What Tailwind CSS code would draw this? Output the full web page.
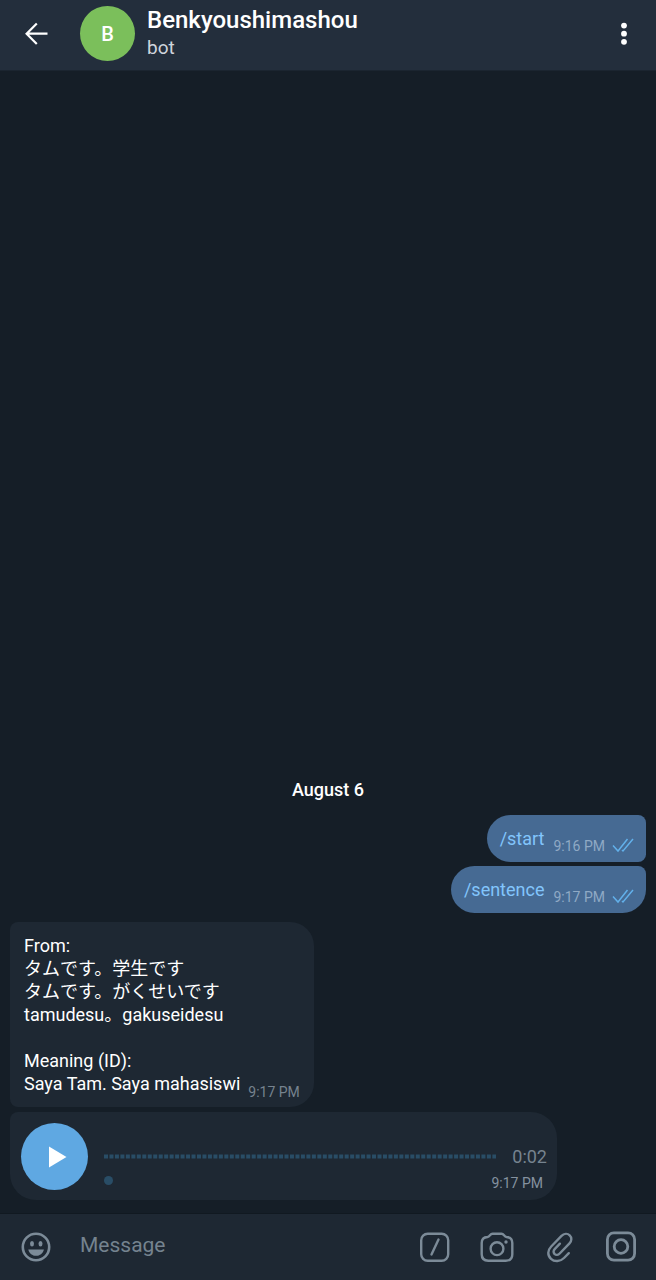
<!DOCTYPE html>
<html lang="en">
<head>
<meta charset="utf-8">
<meta name="viewport" content="width=device-width, initial-scale=1">
<title>Benkyoushimashou</title>
<script src="https://cdn.jsdelivr.net/npm/@tailwindcss/browser@4"></script>
</head>
<body class="flex min-h-screen flex-col bg-[#151e27] font-['Roboto','Noto_Sans_CJK_JP',sans-serif] text-white">

<header class="flex h-[71px] items-start border-b border-[#1b2530] bg-[#232e3c] px-6">
  <button type="button" aria-label="Back" class="mt-5">
    <svg class="h-7 w-7" viewBox="0 0 28 28" fill="none" stroke="#fff" stroke-width="2.2"><path d="M23.5 13.7H3M12.800 3.4L2.600 13.7l10.2 10.3"/></svg>
  </button>
  <div class="mt-1.5 ml-7 flex h-[55px] w-[55px] items-center justify-center rounded-full bg-[#7bbf5b] text-xl font-medium">B</div>
  <div class="ml-3 flex-1 pt-[5px]">
    <h1 class="text-2xl leading-[30px] font-medium">Benkyoushimashou</h1>
    <p class="text-[19px] leading-[26px] text-[#cfd5dc]">bot</p>
  </div>
  <button type="button" aria-label="More options" class="mt-5 px-1">
    <svg class="h-7 w-2" viewBox="0 0 8 28" fill="#fff"><circle cx="4" cy="5.6" r="2.9"/><circle cx="4" cy="13.7" r="2.9"/><circle cx="4" cy="21.8" r="2.9"/></svg>
  </button>
</header>

<main class="flex flex-1 flex-col justify-end px-2.5 pb-[13px]">
  <p class="mb-[13px] text-center text-lg leading-6 font-medium">August 6</p>

  <div class="mb-1 flex h-[47px] items-start gap-[9px] self-end rounded-l-[24px] rounded-r-lg bg-[#466a93] pr-3 pl-[13px]">
    <a href="#" class="pt-3 text-lg leading-6 text-[#82c5fc]">/start</a>
    <time class="pt-[21px] text-sm leading-5 text-[#8fa9c5]">9:16 PM</time>
    <svg class="-ml-1 mt-5 h-5 w-6" viewBox="0 0 24 20" fill="none" stroke="#62b0ea" stroke-width="1.5"><path d="M3 10.500l5 5.500L17.500 4M12 15l1 1L23 4"/></svg>
  </div>

  <div class="mb-[9px] flex h-[47px] items-start gap-[9px] self-end rounded-l-[24px] rounded-tr-lg rounded-br-[24px] bg-[#466a93] pr-3 pl-[13px]">
    <a href="#" class="pt-3 text-lg leading-6 text-[#82c5fc]">/sentence</a>
    <time class="pt-[21px] text-sm leading-5 text-[#8fa9c5]">9:17 PM</time>
    <svg class="-ml-1 mt-5 h-5 w-6" viewBox="0 0 24 20" fill="none" stroke="#62b0ea" stroke-width="1.5"><path d="M3 10.500l5 5.500L17.500 4M12 15l1 1L23 4"/></svg>
  </div>

  <div class="mb-[5px] flex items-end gap-2 self-start rounded-l-lg rounded-r-[24px] bg-[#1e2833] px-3.5 py-3">
    <div class="text-lg leading-[23px]">
      <p>From:</p>
      <p>タムです。学生です</p>
      <p>タムです。がくせいです</p>
      <p>tamudesu。gakuseidesu</p>
      <br>
      <p>Meaning (ID):</p>
      <p>Saya Tam. Saya mahasiswi</p>
    </div>
    <time class="-mb-[7px] text-sm leading-5 text-[#76838f]">9:17 PM</time>
  </div>

  <div class="flex h-[88px] w-full max-w-[547px] items-start self-start rounded-tl-lg rounded-r-[26px] rounded-bl-[26px] bg-[#1e2833] pt-[11px] pr-2.5 pl-[11px]">
    <button type="button" aria-label="Play" class="flex h-[67px] w-[67px] shrink-0 items-center justify-center rounded-full bg-[#5fa8e2]">
      <svg class="h-6 w-6" viewBox="0 0 24 24" fill="#fff"><path d="M6 1.500L23.500 12 6 22.500z"/></svg>
    </button>
    <div class="ml-4 flex-1">
      <div class="flex items-center pt-5">
        <svg class="h-6 flex-1" aria-hidden="true"><path d="M0 11.500H393" stroke="#294d66" stroke-width="4" stroke-dasharray="4 1.47"/></svg>
        <span class="ml-4 text-lg leading-7 text-[#76838f]">0:02</span>
      </div>
      <div class="flex items-center justify-between pr-1">
        <span class="mb-1 h-[9px] w-[9px] rounded-full bg-[#294d66]"></span>
        <time class="pt-0.5 text-sm leading-5 text-[#8592a0]">9:17 PM</time>
      </div>
    </div>
  </div>
</main>

<footer class="flex h-[67px] items-center border-t border-[#111921] bg-[#1e2833] pr-[18px] pl-5 text-[#7c8b98]">
  <button type="button" aria-label="Emoji">
    <svg class="h-8 w-8" viewBox="0 0 32 32"><circle cx="16" cy="16" r="13.200" fill="none" stroke="currentColor" stroke-width="2.600"/><ellipse cx="12" cy="12.700" rx="2" ry="2.700" fill="currentColor"/><ellipse cx="20.500" cy="12.700" rx="2" ry="2.700" fill="currentColor"/><path fill="currentColor" d="M8.300 18.500h15.600c-1 4-4 6.300-7.800 6.300s-6.800-2.300-7.800-6.300z"/></svg>
  </button>
  <input type="text" aria-label="Message" placeholder="Message" class="ml-7 h-10 min-w-0 flex-1 bg-transparent pb-1 text-[21px] text-white outline-none placeholder:text-[#75838f]">
  <div class="flex items-center gap-[30px]">
    <button type="button" aria-label="Bot commands">
      <svg class="h-8 w-8" viewBox="0 0 32 32" fill="none" stroke="currentColor" stroke-width="2.400" stroke-linecap="round"><rect x="3.200" y="2.700" width="27" height="27" rx="6.500"/><path d="M20.500 8.500L13.500 23.500"/></svg>
    </button>
    <button type="button" aria-label="Camera">
      <svg class="h-8 w-[34px]" viewBox="0 0 34 32" fill="none" stroke="currentColor" stroke-width="2.400" stroke-linejoin="round"><path d="M12.500 2.700h9c2.500 0 2.500 3 5 3.300 3.500.2 5.800 2.500 5.800 6v11.200c0 4-2.500 6.500-6.500 6.500H8.200c-4 0-6.500-2.500-6.500-6.500V12c0-3.500 2.300-5.800 5.800-6 2.500-.3 2.500-3.300 5-3.300z"/><circle cx="17" cy="17.700" r="6.400"/><circle cx="26" cy="11" r="1.700" fill="currentColor" stroke="none"/></svg>
    </button>
    <button type="button" aria-label="Attach">
      <svg class="h-8 w-8" viewBox="0 0 32 32" fill="none" stroke="currentColor" stroke-width="2.400" stroke-linecap="round"><path d="M24.800 22.200L20 27c-3.800 3.700-9.500 4-13 .8-3.800-3.500-3.500-8.500.2-12.300L17.500 4.900c2.500-2.500 6-2.700 8.200-.6s2.200 5.500-.2 8L15.700 22.500c-1.500 1.600-3.700 1.900-5.100.5-1.500-1.400-1.300-3.500.3-5.100l5-5.200"/></svg>
    </button>
    <button type="button" aria-label="Record video">
      <svg class="h-8 w-8" viewBox="0 0 32 32" fill="none" stroke="currentColor" stroke-width="2.800"><rect x="1.400" y="1.900" width="27.200" height="27.200" rx="6.500"/><circle cx="15" cy="15.500" r="6.800"/></svg>
    </button>
  </div>
</footer>
</body>
</html>
